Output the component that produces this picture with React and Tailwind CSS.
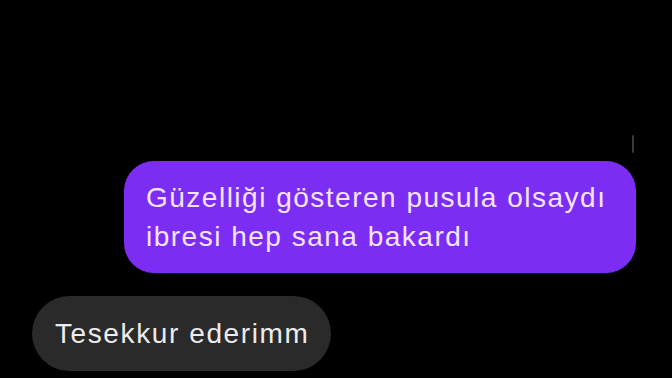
export default function App() {
  return (
    <div className="w-[672px] h-[378px] bg-black overflow-hidden flex flex-col" style={{ fontFamily: "'Liberation Sans', Arial, sans-serif" }}>
      <div className="flex justify-end pr-[38px] pt-[135px] h-[161px]">
        <div className="w-[2px] h-[18px] bg-[#3a3a3a] rounded-full"></div>
      </div>
      <div className="flex justify-end pr-[36px]">
        <div className="w-[512px] h-[112px] rounded-[30px] bg-[#7b2df4] pl-[22px] pt-[17px] text-[28px] leading-[39px] tracking-[1.5px] text-[#f6e4ff]">
          <div>Güzelliği gösteren pusula olsaydı</div>
          <div>ibresi hep sana bakardı</div>
        </div>
      </div>
      <div className="flex pl-[32px] pt-[23px]">
        <div className="w-[299px] h-[75px] rounded-[38px] bg-[#2a2a2a] pl-[23px] flex items-center text-[28px] tracking-[1.6px] text-[#ececec]">
          Tesekkur ederimm
        </div>
      </div>
    </div>
  );
}
